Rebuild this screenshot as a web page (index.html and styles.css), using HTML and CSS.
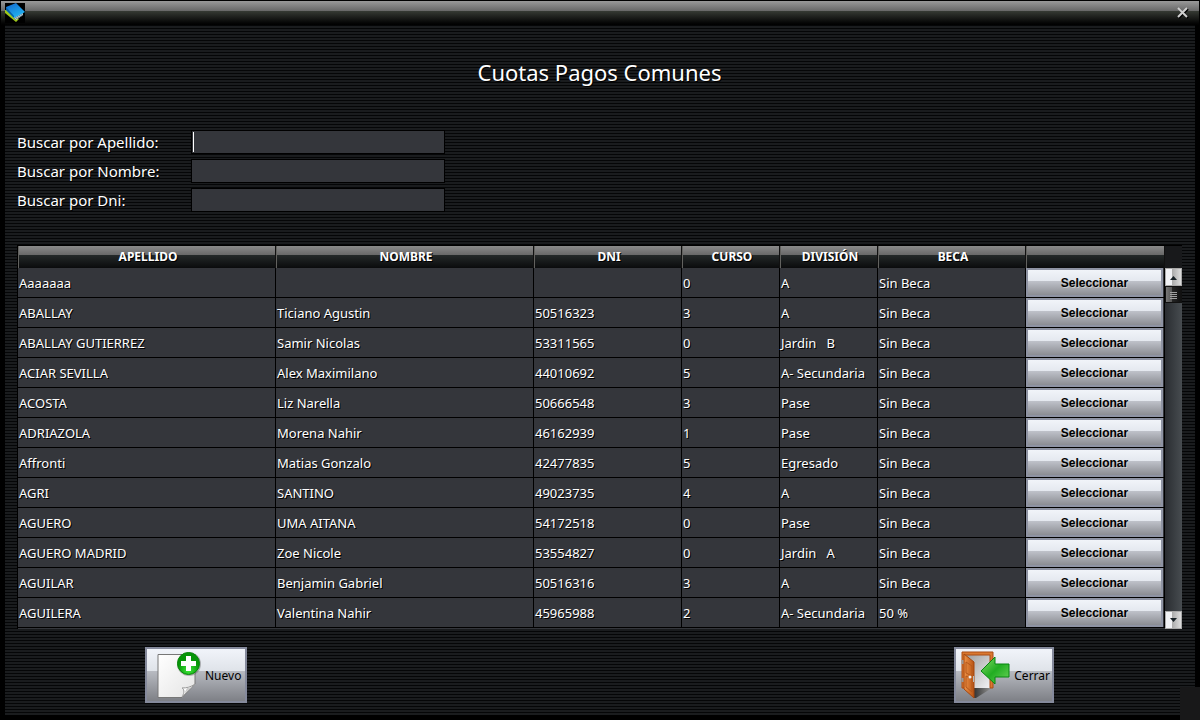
FILE: index.html
```
<!DOCTYPE html>
<html lang="es">
<head>
<meta charset="utf-8">
<title>Cuotas Pagos Comunes</title>
<link rel="stylesheet" href="styles.css">
</head>
<body>
<div class="window">
  <header class="titlebar">
    <svg class="app-icon" viewBox="0 0 20 20" aria-hidden="true">
      <defs><linearGradient id="book" x2=".6" y2="1"><stop stop-color="#1467cf"/><stop offset="1" stop-color="#20b4f2"/></linearGradient></defs>
      <rect width="20" height="20" fill="#000"/>
      <path d="M0 7L0 10L11 19L14 16L8 13L2 7Z" fill="#9cc41c"/>
      <path d="M8 14L18 9V12L11 17Z" fill="#e8f2f8"/>
      <path d="M9 15.500L18 10.500M10 16.500L18 12" stroke="#356" stroke-width=".7"/>
      <path d="M1 4L11 0L20 9L9 15L1 7Z" fill="url(#book)"/>
      <path d="M1 4L9 13V15L1 7Z" fill="#075fa6"/>
    </svg>
    <button class="close" type="button" aria-label="Cerrar ventana"><svg viewBox="0 0 13 13" aria-hidden="true"><path d="M3 3L12 12M12 3L3 12" stroke="#000" stroke-width="2"/><path d="M2 2L11 11M11 2L2 11" stroke="#d0d0d0" stroke-width="2"/></svg></button>
  </header>
  <main class="content">
    <h1 class="title">Cuotas Pagos Comunes</h1>
    <form class="search">
      <label for="apellido">Buscar por Apellido:</label><span class="field focused"><input id="apellido" type="text"></span>
      <label for="nombre">Buscar por Nombre:</label><span class="field"><input id="nombre" type="text"></span>
      <label for="dni">Buscar por Dni:</label><span class="field"><input id="dni" type="text"></span>
    </form>
    <section class="grid">
      <div class="viewport">
        <table>
          <colgroup><col class="wide"><col class="wide"><col class="mid"><col class="small"><col class="small"><col class="mid"><col class="action"></colgroup>
          <thead><tr><th>APELLIDO</th><th>NOMBRE</th><th>DNI</th><th>CURSO</th><th>DIVISIÓN</th><th>BECA</th><th></th></tr></thead>
          <tbody id="rows"></tbody>
        </table>
      </div>
      <div class="scrollbar">
        <button class="arrow" type="button" aria-label="Subir"><svg viewBox="0 0 9 5" aria-hidden="true"><path d="M1 5L4.500 1L8 5Z"/></svg></button>
        <div class="track"><div class="thumb"></div></div>
        <button class="arrow" type="button" aria-label="Bajar"><svg viewBox="0 0 9 5" aria-hidden="true"><path d="M1 0L4.500 4L8 0Z"/></svg></button>
      </div>
    </section>
    <footer class="actions">
      <button class="command new" type="button">
        <svg class="icon-new" viewBox="0 0 46 48" aria-hidden="true">
          <defs><linearGradient id="paper" x2="1" y2="1"><stop stop-color="#fff"/><stop offset="1" stop-color="#e4e4e4"/></linearGradient><radialGradient id="green" cy=".8"><stop stop-color="#3ee83a"/><stop offset="1" stop-color="#079509"/></radialGradient></defs>
          <path d="M1 3.500H38V33L25 46.500H1Z" fill="url(#paper)" stroke="#777"/>
          <path d="M25 46C28 41 27 38 25 37C30 37 34 36 38 33Z" fill="#fff" stroke="#999"/>
          <path d="M27 43L30 37L35 36Z" fill="#ccc"/>
          <circle cx="32" cy="13" r="12" fill="#555" opacity=".4"/>
          <circle cx="31.500" cy="12.500" r="11" fill="url(#green)" stroke="#078b09"/>
          <path d="M29 5H34V10H39V15H34V20H29V15H24V10H29Z" fill="#fff"/>
        </svg>
        <span>Nuevo</span>
      </button>
      <button class="command exit" type="button">
        <svg class="icon-exit" viewBox="0 0 50 48" aria-hidden="true">
          <defs><linearGradient id="door" x2="1"><stop stop-color="#ef9448"/><stop offset="1" stop-color="#b75213"/></linearGradient><linearGradient id="arrow" x2="1" y2="1"><stop stop-color="#8bdd6b"/><stop offset=".5" stop-color="#21ad22"/><stop offset="1" stop-color="#70d65d"/></linearGradient><linearGradient id="inside" x2="1" y2="1"><stop stop-color="#999"/><stop offset="1" stop-color="#f4f4f7"/></linearGradient><linearGradient id="shade" x2="1"><stop stop-color="#333"/><stop offset="1" stop-color="#999"/></linearGradient></defs>
          <path d="M3 3H30V37H13Z" fill="url(#inside)"/>
          <path d="M13 37H31L15 47H13Z" fill="url(#shade)"/>
          <path d="M1 37V1H32V37H29V4H4V37Z" fill="#da7830" stroke="#aa4d14"/>
          <path d="M3 3L13 11V47L3 38Z" fill="url(#door)" stroke="#a5460e"/>
          <path d="M5 11L11 15V25L5 22ZM5 25L11 28V41L5 36Z" fill="none" stroke="#b5581c"/>
          <circle cx="9" cy="26" r="1.500" fill="#eee"/><path d="M12.500 25V31" stroke="#bbb"/><path d="M1.500 9V13M1.500 27V31" stroke="#999" stroke-width="2"/>
          <path d="M20 20L34 6V13H48V26H34V33Z" fill="url(#arrow)" stroke="#078511"/>
        </svg>
        <span>Cerrar</span>
      </button>
    </footer>
  </main>
  <div class="resize-corner"></div>
</div>
<script src="app.js"></script>
</body>
</html>
```
FILE: styles.css
```
* { box-sizing: border-box; }
body { margin: 0; background: #000; color: #fff; font-family: Tahoma, "Noto Sans", sans-serif; }
button { font: inherit; color: #000; margin: 0; padding: 0; border-radius: 0; }
.window { position: relative; min-height: 100vh; display: flex; flex-direction: column; padding: 1px 1px 5px; background: #000; }
.titlebar { height: 24px; padding: 2px 10px 0 4px; display: flex; justify-content: space-between; background: linear-gradient(#999, #676767 10px, #363a34 10px, #050505 22px, #000); }
.app-icon { width: 20px; height: 20px; }
.close { width: 13px; height: 13px; margin-top: 3px; background: none; border: 0; }
.close svg { display: block; }
.content { flex: 1; margin: 0 4px; padding: 0 13px 12px 12px; display: flex; flex-direction: column; background: repeating-linear-gradient(#050607 0 1px, #1a1c1e 1px 3px); }
.title { margin: 30px 0 41px; text-align: center; font-size: 22px; line-height: 34px; font-weight: 400; text-shadow: 1px 1px #000; }
.search { display: grid; grid-template-columns: 174px 254px; row-gap: 5px; align-items: center; font-size: 15px; line-height: 24px; text-shadow: 1px 1px #000; }
.field { display: flex; height: 24px; padding: 1px; border: 1px solid #000; background: #34363b; }
.field input { flex: 1; min-width: 0; border: 0; padding: 0 2px; outline: 0; background: none; color: #fff; font: inherit; }
.focused input { border-left: 1px solid #fff; }
.grid { display: flex; margin-top: 33px; height: 384px; border-top: 1px solid #000; border-left: 1px solid #000; }
.viewport { flex: 1; overflow: hidden; background: #34363b; }
table { width: 100%; table-layout: fixed; border-collapse: separate; border-spacing: 0; font-size: 13px; text-shadow: 1px 1px #000; }
.wide { width: 258px; }
.mid { width: 148px; }
.small { width: 98px; }
th { height: 22px; padding: 0 0 0 2px; border-left: 1px solid #62625f; border-right: 1px solid #111; font-size: 12px; line-height: 22px; background: linear-gradient(#8a8a8a, #686868 9px, #242929 9px, #0a0b0c 22px); }
td { height: 30px; padding: 0 1px; border-right: 1px solid #000; border-bottom: 1px solid #000; line-height: 20px; white-space: pre; background: #34363b; }
td:last-child { padding: 0 1px 0 0; }
.select { display: block; width: 100%; height: 29px; border: 2px solid #8e93a3; background: linear-gradient(#f1f4f9, #e4e8ef 44%, #bfc2ca 44%, #8b8d93); font: bold 12px/20px "Liberation Sans", Arial, sans-serif; text-shadow: 1px 1px #ccc; }
.scrollbar { width: 17px; padding-top: 22px; display: flex; flex-direction: column; background: #18191b; }
.arrow { height: 18px; border: 1px solid #aaa; display: flex; align-items: center; justify-content: center; background: linear-gradient(90deg, #f1f2f5 40%, #aaa 40%, #ddd); }
.arrow svg { width: 9px; height: 5px; fill: #182126; }
.track { flex: 1; background: linear-gradient(90deg, #2a2d31, #474c50); }
.thumb { height: 17px; border: 1px solid #111; background: repeating-linear-gradient(transparent 0 1px, #a0a0a0 1px 2px) 4px 4px / 7px 8px no-repeat, linear-gradient(90deg, #777, #555 40%, #252525 40%, #111); }
.actions { display: flex; justify-content: space-between; padding: 18px 128px 0 128px; }
.command { height: 56px; display: flex; align-items: center; gap: 3px; padding: 0 5px; border: 2px solid #858a9c; background: linear-gradient(#f1f4fa, #dfe3e9 42%, #b8bbc2 42%, #7e8086); font-size: 12px; }
.new { padding: 0 4px 0 10px; gap: 2px; }
.exit { padding-right: 2px; }
.icon-new { width: 46px; height: 48px; }
.icon-exit { width: 50px; height: 48px; }
.resize-corner { position: absolute; right: 0; bottom: 0; width: 20px; height: 33px; background: #181819; }
```
FILE: app.js
```
const people = [
  ["Aaaaaaa", "", "", "0", "A", "Sin Beca"],
  ["ABALLAY", "Ticiano Agustin", "50516323", "3", "A", "Sin Beca"],
  ["ABALLAY GUTIERREZ", "Samir Nicolas", "53311565", "0", "Jardin   B", "Sin Beca"],
  ["ACIAR SEVILLA", "Alex Maximilano", "44010692", "5", "A- Secundaria", "Sin Beca"],
  ["ACOSTA", "Liz Narella", "50666548", "3", "Pase", "Sin Beca"],
  ["ADRIAZOLA", "Morena Nahir", "46162939", "1", "Pase", "Sin Beca"],
  ["Affronti", "Matias Gonzalo", "42477835", "5", "Egresado", "Sin Beca"],
  ["AGRI", "SANTINO", "49023735", "4", "A", "Sin Beca"],
  ["AGUERO", "UMA AITANA", "54172518", "0", "Pase", "Sin Beca"],
  ["AGUERO MADRID", "Zoe Nicole", "53554827", "0", "Jardin   A", "Sin Beca"],
  ["AGUILAR", "Benjamin Gabriel", "50516316", "3", "A", "Sin Beca"],
  ["AGUILERA", "Valentina Nahir", "45965988", "2", "A- Secundaria", "50 %"]
];
const body = document.getElementById("rows");
for (const person of people) {
  const row = body.insertRow();
  for (const value of person) row.insertCell().textContent = value;
  const button = document.createElement("button");
  button.type = "button";
  button.className = "select";
  button.textContent = "Seleccionar";
  row.insertCell().append(button);
}
```
